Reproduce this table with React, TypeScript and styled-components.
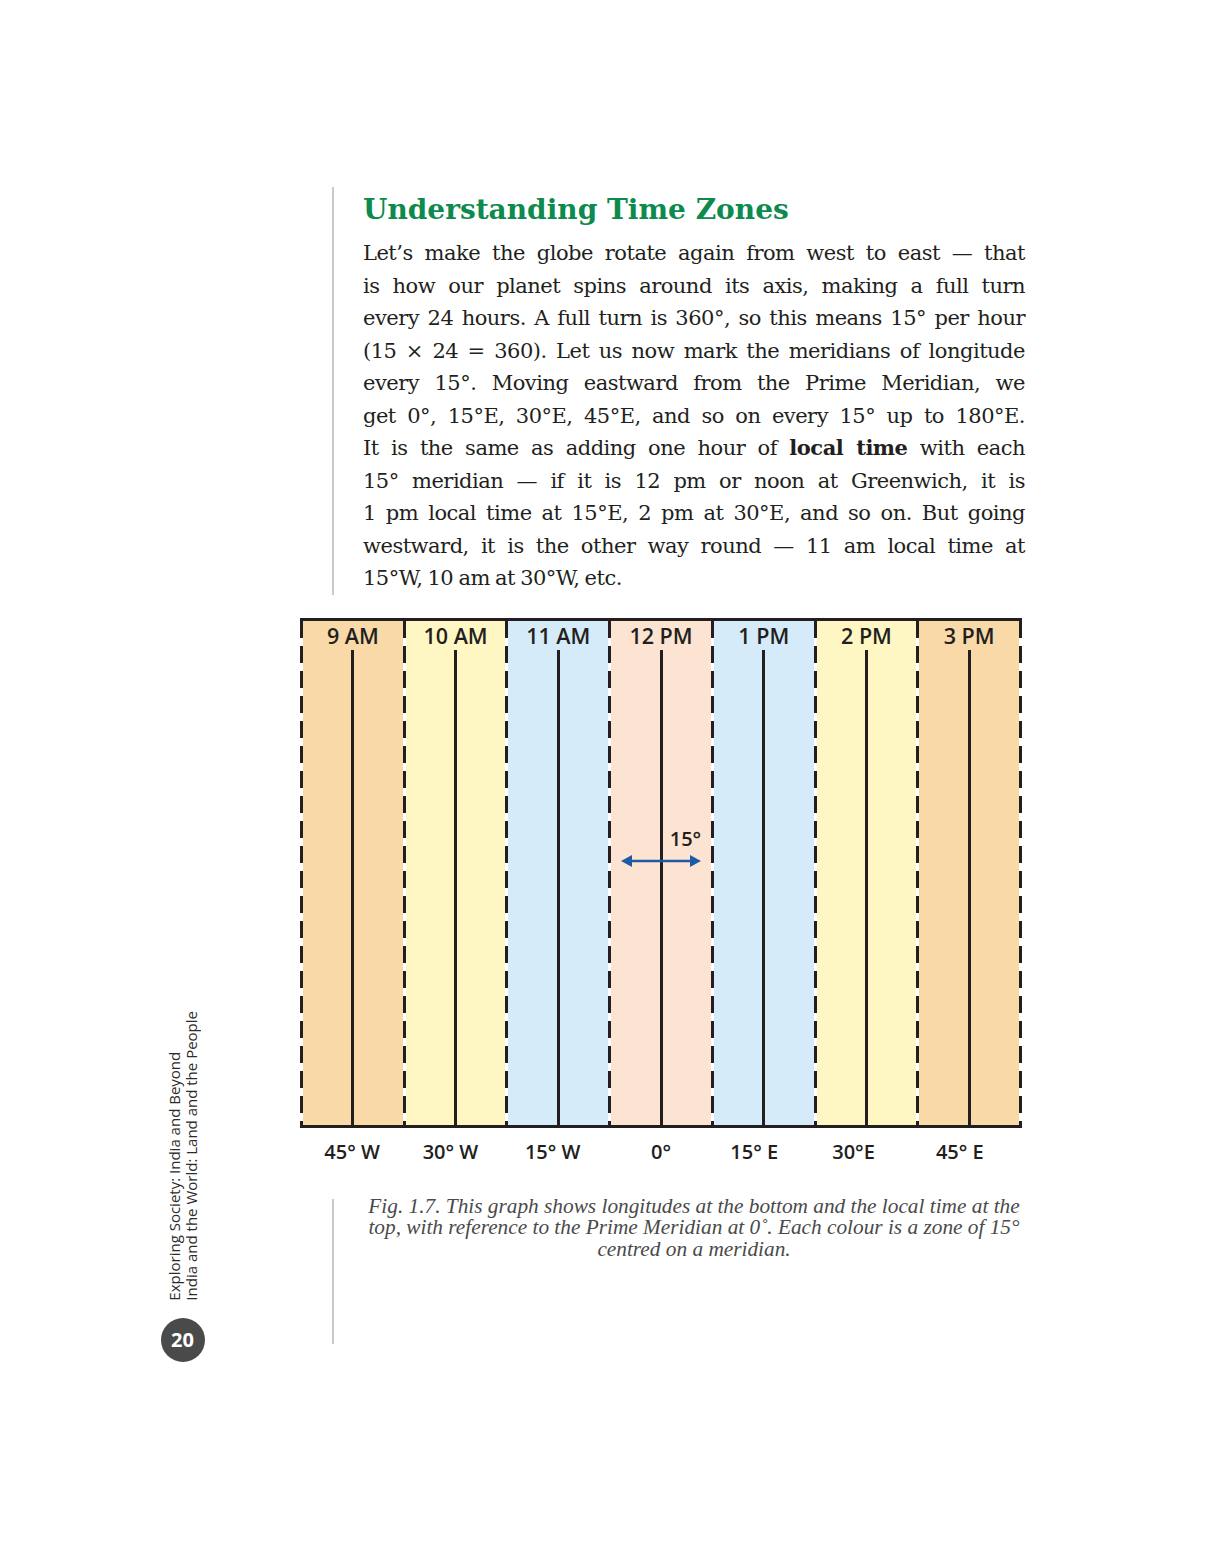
import React from 'react';
import styled, { createGlobalStyle } from 'styled-components';

const INK = '#231f20';
const RULE = '#c9c9c9';

const ZONE_COLORS = {
  orange: '#fad9a8',
  yellow: '#fef7c4',
  blue: '#d5ebf9',
  peach: '#fde4d2',
};

interface IZone {
  time: string;
  lon: string;
  color: string;
  dx: number;
  arrow?: boolean;
}

const zones: IZone[] = [
  { time: '9 AM', lon: '45° W', color: ZONE_COLORS.orange, dx: -2 },
  { time: '10 AM', lon: '30° W', color: ZONE_COLORS.yellow, dx: -6 },
  { time: '11 AM', lon: '15° W', color: ZONE_COLORS.blue, dx: -6 },
  { time: '12 PM', lon: '0°', color: ZONE_COLORS.peach, dx: 0, arrow: true },
  { time: '1 PM', lon: '15° E', color: ZONE_COLORS.blue, dx: -9 },
  { time: '2 PM', lon: '30°E', color: ZONE_COLORS.yellow, dx: -12 },
  { time: '3 PM', lon: '45° E', color: ZONE_COLORS.orange, dx: -8 },
];

const GlobalStyle = createGlobalStyle`
  html, body {
    margin: 0;
    padding: 0;
    background: #fff;
  }
  body {
    font-family: "DejaVu Serif", serif;
    color: ${INK};
  }
`;

export const StyledPage = styled.div`
  width: 1213px;
  box-sizing: border-box;
  padding: 187px 0 195px;
  display: flex;
  align-items: flex-end;
`;

export const StyledSidebar = styled.aside`
  width: 45px;
  margin-left: 160px;
  margin-bottom: -18px;
  display: flex;
  flex-direction: column;
  align-items: center;
  gap: 17px;
`;

export const StyledRunningHead = styled.div`
  writing-mode: vertical-rl;
  transform: rotate(180deg);
  font-family: "Open Sans", "Noto Sans", sans-serif;
  font-weight: 500;
  font-size: 15px;
  line-height: 17px;
  color: #2b2b2b;
  white-space: nowrap;
`;

export const StyledPageNumber = styled.div`
  width: 44px;
  height: 44px;
  border-radius: 50%;
  background: #4a4a4a;
  color: #fff;
  font-family: "Open Sans", "Noto Sans", sans-serif;
  font-weight: 700;
  font-size: 20px;
  display: flex;
  align-items: center;
  justify-content: center;
`;

export const StyledMain = styled.main`
  margin-left: 95px;
  width: 722px;
  display: flex;
  flex-direction: column;
`;

export const StyledRuledBlock = styled.section<{ $height?: string }>`
  margin-left: 32px;
  border-left: 2px solid ${RULE};
  padding-left: 29px;
  width: 662px;
  height: ${({ $height }) => $height || 'auto'};
`;

export const StyledTitle = styled.h2`
  margin: 0;
  padding-top: 6px;
  font-family: "DejaVu Serif", serif;
  font-weight: 700;
  font-size: 28px;
  line-height: 34px;
  color: #0d8a4e;
`;

export const StyledBody = styled.p`
  margin: 10px 0 0;
  font-size: 21px;
  line-height: 32.5px;
  letter-spacing: -0.5px;
  word-spacing: -1px;
  color: ${INK};
`;

export const StyledLine = styled.span<{ $last?: boolean }>`
  display: block;
  white-space: nowrap;
  text-align: ${({ $last }) => ($last ? 'left' : 'justify')};
  text-align-last: ${({ $last }) => ($last ? 'left' : 'justify')};
`;

export const StyledChart = styled.div`
  margin-top: 23px;
  height: 504px;
  border-top: 3px solid ${INK};
  border-bottom: 3px solid ${INK};
  display: flex;
`;

export const StyledDash = styled.div`
  width: 3px;
  flex: 0 0 3px;
  background-image: repeating-linear-gradient(
    to bottom,
    ${INK} 0 17px,
    transparent 17px 25px
  );
`;

export const StyledZone = styled.div<{ $color: string }>`
  flex: 1;
  position: relative;
  background: ${({ $color }) => $color};
  display: flex;
  flex-direction: column;
  align-items: center;
`;

export const StyledTimeLabel = styled.div`
  height: 29px;
  line-height: 29px;
  font-family: "Open Sans", "Noto Sans", sans-serif;
  font-weight: 600;
  font-size: 21.5px;
  color: ${INK};
  white-space: nowrap;
`;

export const StyledMeridian = styled.div`
  flex: 1;
  width: 3px;
  background: ${INK};
`;

export const StyledSpan = styled.div`
  position: absolute;
  left: 10px;
  top: 206px;
  width: 80px;
  display: flex;
  flex-direction: column;
  align-items: flex-end;
  font-family: "Open Sans", "Noto Sans", sans-serif;
  font-weight: 600;
  font-size: 20px;
  line-height: 24px;
  color: ${INK};

  svg {
    display: block;
    margin-top: 3px;
  }
`;

export const StyledLonRow = styled.div`
  display: flex;
  padding: 0 3px;
  margin-top: 11px;
`;

export const StyledLonLabel = styled.div`
  flex: 1;
  text-align: center;
  font-family: "Open Sans", "Noto Sans", sans-serif;
  font-weight: 600;
  font-size: 20px;
  line-height: 26px;
  color: ${INK};
  white-space: nowrap;
`;

export const StyledCaptionGap = styled.div`
  height: 34px;
`;

export const StyledCaption = styled.p`
  margin: -3px 0 0;
  font-family: "Liberation Serif", serif;
  font-style: italic;
  font-size: 21.3px;
  line-height: 21.5px;
  text-align: center;
  color: #4a4a4a;
`;

const bodyLines: React.ReactNode[] = [
  'Let’s make the globe rotate again from west to east — that',
  'is how our planet spins around its axis, making a full turn',
  'every 24 hours. A full turn is 360°, so this means 15° per hour',
  '(15 × 24 = 360). Let us now mark the meridians of longitude',
  'every 15°. Moving eastward from the Prime Meridian, we',
  'get 0°, 15°E, 30°E, 45°E, and so on every 15° up to 180°E.',
  <>
    It is the same as adding one hour of <b>local time</b> with each
  </>,
  '15° meridian — if it is 12 pm or noon at Greenwich, it is',
  '1 pm local time at 15°E, 2 pm at 30°E, and so on. But going',
  'westward, it is the other way round — 11 am local time at',
  '15°W, 10 am at 30°W, etc.',
];

const SpanArrow = () => (
  <svg width='80' height='14' viewBox='0 0 80 14'>
    <line x1='8' y1='7' x2='72' y2='7' stroke='#1f5aa6' strokeWidth='2.5' />
    <polygon points='0,7 11,1 11,13' fill='#1f5aa6' />
    <polygon points='80,7 69,1 69,13' fill='#1f5aa6' />
  </svg>
);

const TimeZoneChart = () => (
  <>
    <StyledChart>
      <StyledDash />
      {zones.map((zone) => (
        <React.Fragment key={zone.time}>
          <StyledZone $color={zone.color}>
            <StyledTimeLabel>{zone.time}</StyledTimeLabel>
            <StyledMeridian />
            {zone.arrow && (
              <StyledSpan>
                <span>15°</span>
                <SpanArrow />
              </StyledSpan>
            )}
          </StyledZone>
          <StyledDash />
        </React.Fragment>
      ))}
    </StyledChart>
    <StyledLonRow>
      {zones.map((zone) => (
        <StyledLonLabel key={zone.lon} style={{ transform: `translateX(${zone.dx}px)` }}>
          {zone.lon}
        </StyledLonLabel>
      ))}
    </StyledLonRow>
  </>
);

const App = () => (
  <>
    <GlobalStyle />
    <StyledPage>
      <StyledSidebar>
        <StyledRunningHead>
          Exploring Society: India and Beyond
          <br />
          India and the World: Land and the People
        </StyledRunningHead>
        <StyledPageNumber>20</StyledPageNumber>
      </StyledSidebar>
      <StyledMain>
        <StyledRuledBlock>
          <StyledTitle>Understanding Time Zones</StyledTitle>
          <StyledBody>
            {bodyLines.map((line, i) => (
              <StyledLine key={i} $last={i === bodyLines.length - 1}>
                {line}
              </StyledLine>
            ))}
          </StyledBody>
        </StyledRuledBlock>
        <TimeZoneChart />
        <StyledCaptionGap />
        <StyledRuledBlock $height='145px'>
          <StyledCaption>
            Fig. 1.7. This graph shows longitudes at the bottom and the local time at the
            <br />
            top, with reference to the Prime Meridian at 0˚. Each colour is a zone of 15°
            <br />
            centred on a meridian.
          </StyledCaption>
        </StyledRuledBlock>
      </StyledMain>
    </StyledPage>
  </>
);

export default App;
